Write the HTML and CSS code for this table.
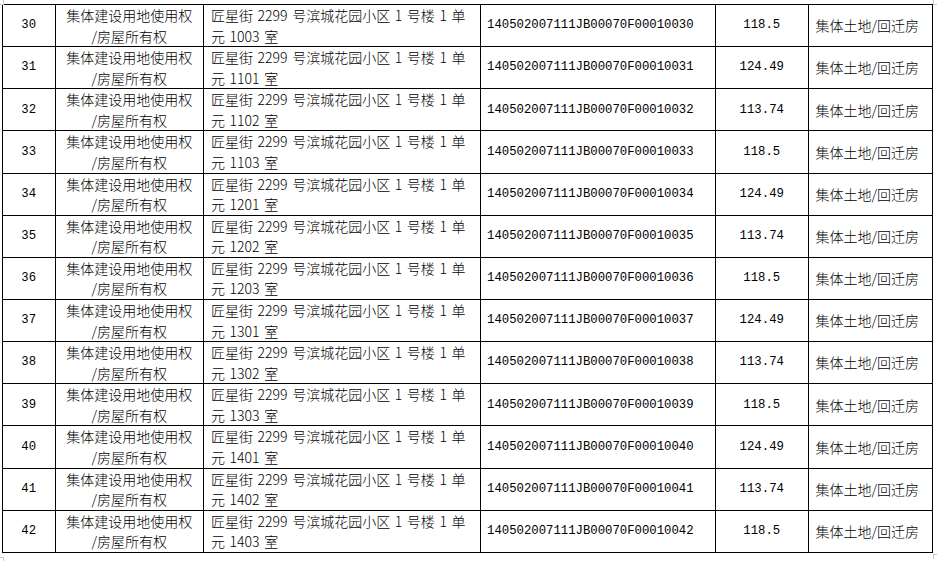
FILE: index.html
```html
<!DOCTYPE html>
<html lang="zh-CN">
<head>
<meta charset="utf-8">
<title>表格</title>
<link rel="stylesheet" href="styles.css">
</head>
<body>
<div class="page">
<span class="mark mark-tl"></span><span class="mark mark-tr"></span><span class="mark mark-bl"></span><span class="mark mark-br"></span>
<table class="grid">
<colgroup><col class="c1"><col class="c2"><col class="c3"><col class="c4"><col class="c5"><col class="c6"></colgroup>
<tbody>
<tr><td class="num">30</td><td class="type">集体建设用地使用权<br>/房屋所有权</td><td class="addr">匠星街 2299 号滨城花园小区 1 号楼 1 单<br>元 1003 室</td><td class="code">140502007111JB00070F00010030</td><td class="area">118.5</td><td class="kind">集体土地/回迁房</td></tr>
<tr><td class="num">31</td><td class="type">集体建设用地使用权<br>/房屋所有权</td><td class="addr">匠星街 2299 号滨城花园小区 1 号楼 1 单<br>元 1101 室</td><td class="code">140502007111JB00070F00010031</td><td class="area">124.49</td><td class="kind">集体土地/回迁房</td></tr>
<tr><td class="num">32</td><td class="type">集体建设用地使用权<br>/房屋所有权</td><td class="addr">匠星街 2299 号滨城花园小区 1 号楼 1 单<br>元 1102 室</td><td class="code">140502007111JB00070F00010032</td><td class="area">113.74</td><td class="kind">集体土地/回迁房</td></tr>
<tr><td class="num">33</td><td class="type">集体建设用地使用权<br>/房屋所有权</td><td class="addr">匠星街 2299 号滨城花园小区 1 号楼 1 单<br>元 1103 室</td><td class="code">140502007111JB00070F00010033</td><td class="area">118.5</td><td class="kind">集体土地/回迁房</td></tr>
<tr><td class="num">34</td><td class="type">集体建设用地使用权<br>/房屋所有权</td><td class="addr">匠星街 2299 号滨城花园小区 1 号楼 1 单<br>元 1201 室</td><td class="code">140502007111JB00070F00010034</td><td class="area">124.49</td><td class="kind">集体土地/回迁房</td></tr>
<tr><td class="num">35</td><td class="type">集体建设用地使用权<br>/房屋所有权</td><td class="addr">匠星街 2299 号滨城花园小区 1 号楼 1 单<br>元 1202 室</td><td class="code">140502007111JB00070F00010035</td><td class="area">113.74</td><td class="kind">集体土地/回迁房</td></tr>
<tr><td class="num">36</td><td class="type">集体建设用地使用权<br>/房屋所有权</td><td class="addr">匠星街 2299 号滨城花园小区 1 号楼 1 单<br>元 1203 室</td><td class="code">140502007111JB00070F00010036</td><td class="area">118.5</td><td class="kind">集体土地/回迁房</td></tr>
<tr><td class="num">37</td><td class="type">集体建设用地使用权<br>/房屋所有权</td><td class="addr">匠星街 2299 号滨城花园小区 1 号楼 1 单<br>元 1301 室</td><td class="code">140502007111JB00070F00010037</td><td class="area">124.49</td><td class="kind">集体土地/回迁房</td></tr>
<tr><td class="num">38</td><td class="type">集体建设用地使用权<br>/房屋所有权</td><td class="addr">匠星街 2299 号滨城花园小区 1 号楼 1 单<br>元 1302 室</td><td class="code">140502007111JB00070F00010038</td><td class="area">113.74</td><td class="kind">集体土地/回迁房</td></tr>
<tr><td class="num">39</td><td class="type">集体建设用地使用权<br>/房屋所有权</td><td class="addr">匠星街 2299 号滨城花园小区 1 号楼 1 单<br>元 1303 室</td><td class="code">140502007111JB00070F00010039</td><td class="area">118.5</td><td class="kind">集体土地/回迁房</td></tr>
<tr><td class="num">40</td><td class="type">集体建设用地使用权<br>/房屋所有权</td><td class="addr">匠星街 2299 号滨城花园小区 1 号楼 1 单<br>元 1401 室</td><td class="code">140502007111JB00070F00010040</td><td class="area">124.49</td><td class="kind">集体土地/回迁房</td></tr>
<tr><td class="num">41</td><td class="type">集体建设用地使用权<br>/房屋所有权</td><td class="addr">匠星街 2299 号滨城花园小区 1 号楼 1 单<br>元 1402 室</td><td class="code">140502007111JB00070F00010041</td><td class="area">113.74</td><td class="kind">集体土地/回迁房</td></tr>
<tr><td class="num">42</td><td class="type">集体建设用地使用权<br>/房屋所有权</td><td class="addr">匠星街 2299 号滨城花园小区 1 号楼 1 单<br>元 1403 室</td><td class="code">140502007111JB00070F00010042</td><td class="area">118.5</td><td class="kind">集体土地/回迁房</td></tr>
</tbody>
</table>
</div>
</body>
</html>
```
FILE: styles.css
```css
html, body {
  margin: 0;
  padding: 0;
  background: #ffffff;
}
body {
  font-family: "Noto Sans CJK SC", "Liberation Sans", sans-serif;
  color: #000;
}
.page {
  position: relative;
  width: 937px;
  height: 561px;
  padding: 4px 0 0 2px;
  box-sizing: border-box;
}
.grid {
  border-collapse: collapse;
  table-layout: fixed;
  width: 931px;
}
.c1 { width: 52.5px; }
.c2 { width: 148.5px; }
.c3 { width: 277px; }
.c4 { width: 235px; }
.c5 { width: 92.5px; }
.c6 { width: 124.5px; }
.grid tr {
  height: 42.15px;
}
.grid td {
  border: 1px solid #000;
  padding: 0;
  font-size: 14px;
  font-weight: 300;
  line-height: 20.5px;
  white-space: nowrap;
  overflow: hidden;
  vertical-align: middle;
}
.num {
  text-align: center;
  font-family: "Liberation Mono", monospace;
  font-size: 12.3px !important;
}
.type {
  text-align: center;
}
.addr {
  padding-left: 7px !important;
  word-spacing: 1.5px;
}
.code {
  padding-left: 6px !important;
  font-family: "Liberation Mono", monospace;
  font-size: 12.3px !important;
}
.area {
  text-align: center;
  font-family: "Liberation Mono", monospace;
  font-size: 12.3px !important;
}
.kind {
  padding-left: 7px !important;
}
.mark {
  position: absolute;
  width: 3px;
  height: 4px;
  border-color: #c8c8c8;
  border-style: solid;
  border-width: 0;
}
.mark-tl { left: 0; top: 0; border-right-width: 1px; border-bottom-width: 1px; }
.mark-tr { left: 933px; top: 0; border-left-width: 1px; border-bottom-width: 1px; }
.mark-bl { left: 0; top: 557px; border-right-width: 1px; border-top-width: 1px; }
.mark-br { left: 933px; top: 554px; border-left-width: 1px; border-top-width: 1px; }
```
